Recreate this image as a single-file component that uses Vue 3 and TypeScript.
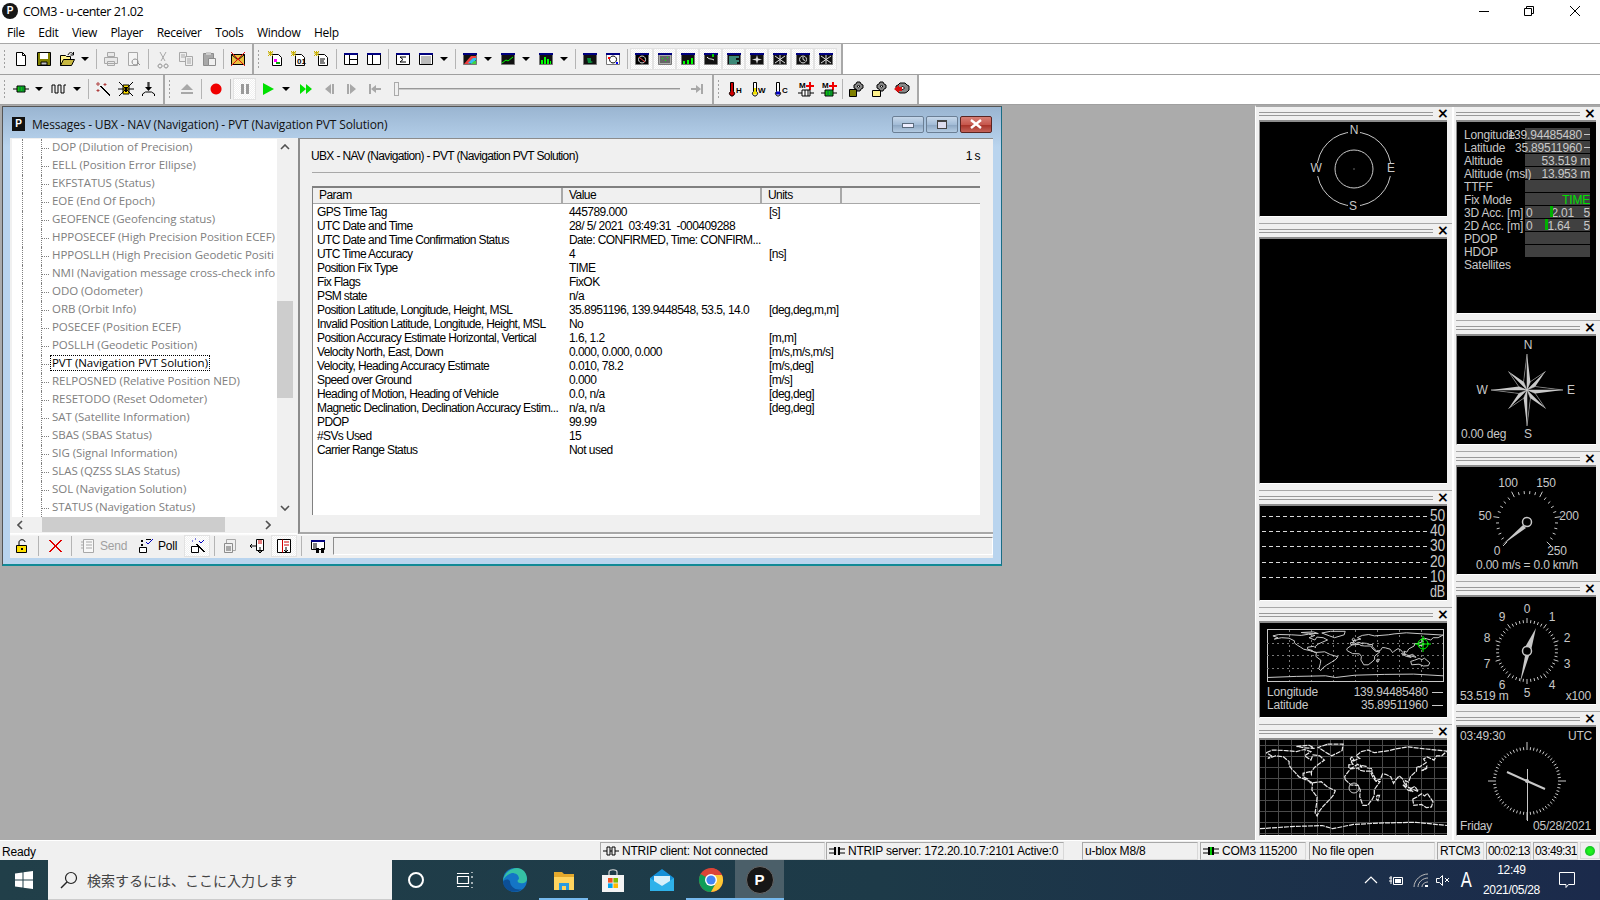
<template>
  <div class="app">
    <header class="titlebar">
      <span class="logo">P</span>
      <span class="title-text">COM3 - u-center 21.02</span>
      <div class="sys-btns">
        <svg class="sys" viewBox="0 0 46 22"><path d="M19 11.500h10" stroke="#000" /></svg>
        <svg class="sys" viewBox="0 0 46 22"><path d="M18.500 8.500h7v7h-7zM20.500 8.500v-2h7v7h-2" fill="none" stroke="#000" /></svg>
        <svg class="sys" viewBox="0 0 46 22"><path d="M18 6l10 10M28 6 18 16" fill="none" stroke="#000" /></svg>
      </div>
    </header>
    <nav class="menubar">
      <span v-for="m in menu" :key="m" class="menu-item">{{ m }}</span>
    </nav>

    <div class="tb-row tb-first">
      <div v-for="(sec, si) in toolbar1" :key="si" class="tb-sec" :class="`w1-${si}`">
        <template v-for="(it, k) in sec" :key="k">
          <i v-if="it === 'grip'" class="grip"></i>
          <i v-else-if="it === '|'" class="sep"></i>
          <i v-else-if="it === 'v'" class="drop"></i>
          <span v-else class="tb-btn" :class="{ pressed: it.endsWith('*') }">
            <svg viewBox="0 0 16 16" class="ico">
              <path v-for="(s, n) in iconOf(it)" :key="n" :d="s[0]" :fill="s[1] || 'none'" :stroke="s[2] || 'none'" />
              <text v-if="labels[it]" :x="labels[it].x" :y="labels[it].y" class="ico-label">{{ labels[it].t }}</text>
            </svg>
          </span>
        </template>
      </div>
    </div>
    <div class="tb-row">
      <div v-for="(sec, si) in toolbar2" :key="si" class="tb-sec" :class="`w2-${si}`">
        <template v-for="(it, k) in sec" :key="k">
          <i v-if="it === 'grip'" class="grip"></i>
          <i v-else-if="it === '|'" class="sep"></i>
          <i v-else-if="it === 'v'" class="drop"></i>
          <span v-else-if="it === 'slider'" class="slider"><b></b></span>
          <span v-else class="tb-btn" :class="{ pressed: it.endsWith('*') }">
            <svg viewBox="0 0 16 16" class="ico">
              <path v-for="(s, n) in iconOf(it)" :key="n" :d="s[0]" :fill="s[1] || 'none'" :stroke="s[2] || 'none'" />
              <text v-if="labels[it]" :x="labels[it].x" :y="labels[it].y" class="ico-label">{{ labels[it].t }}</text>
            </svg>
          </span>
        </template>
      </div>
    </div>

    <main class="main">
      <section class="mdi">
        <div class="msgwin">
          <div class="win-title">
            <span class="win-logo">P</span>
            <span class="win-caption">Messages - UBX - NAV (Navigation) - PVT (Navigation PVT Solution)</span>
            <div class="win-btns">
              <span class="cap-btn"><i class="cap-min"></i></span>
              <span class="cap-btn"><i class="cap-max"></i></span>
              <span class="cap-btn cap-close">
                <svg viewBox="0 0 12 10" width="12" height="10"><path d="M1 1l10 8M11 1 1 9" stroke="#fff" stroke-width="2.400" /></svg>
              </span>
            </div>
          </div>
          <div class="win-body">
            <div class="win-top">
              <div class="tree-pane">
                <div class="tree-wrap">
                  <ul class="tree">
                    <li v-for="t in tree" :key="t" class="tree-row">
                      <i class="guide"></i><i class="guide2"></i>
                      <span class="tree-label" :class="{ sel: t.startsWith('PVT') }">{{ t }}</span>
                    </li>
                  </ul>
                  <div class="vscroll">
                    <svg viewBox="0 0 10 6" class="arrow-v"><path d="M1 5l4-4 4 4" fill="none" stroke="#505050" stroke-width="1.600" /></svg>
                    <div class="vtrack"><div class="vthumb"></div></div>
                    <svg viewBox="0 0 10 6" class="arrow-v"><path d="M1 1l4 4 4-4" fill="none" stroke="#505050" stroke-width="1.600" /></svg>
                  </div>
                </div>
                <div class="hscroll">
                  <svg viewBox="0 0 6 10" class="arrow-h"><path d="M5 1 1 5l4 4" fill="none" stroke="#505050" stroke-width="1.600" /></svg>
                  <div class="hthumb"></div>
                  <svg viewBox="0 0 6 10" class="arrow-h"><path d="M1 1l4 4-4 4" fill="none" stroke="#505050" stroke-width="1.600" /></svg>
                </div>
              </div>
              <div class="detail">
                <div class="detail-head">
                  <span class="detail-name">UBX - NAV (Navigation) - PVT (Navigation PVT Solution)</span>
                  <span>1 s</span>
                </div>
                <div class="list">
                  <div class="list-head">
                    <span class="col-param">Param</span>
                    <span class="col-value">Value</span>
                    <span class="col-units">Units</span>
                    <span class="col-rest"></span>
                  </div>
                  <div class="list-rows">
                    <div v-for="r in rows" :key="r[0]" class="list-row">
                      <span class="cell-param">{{ r[0] }}</span>
                      <span class="cell-value">{{ r[1] }}</span>
                      <span class="cell-units">{{ r[2] }}</span>
                    </div>
                  </div>
                </div>
              </div>
            </div>
            <div class="win-bottom">
              <div class="bottom-tools">
                <template v-for="(it, k) in bottomTools" :key="k">
                  <i v-if="it === '|'" class="sep"></i>
                  <i v-else-if="it === '_'" class="spacer"></i>
                  <span v-else-if="it === 'Send'" class="bt-text off">Send</span>
                  <span v-else-if="it === 'Poll'" class="bt-text poll">Poll</span>
                  <span v-else class="tb-btn" :class="{ pressed: it.endsWith('*') }">
                    <svg viewBox="0 0 16 16" class="ico"><path v-for="(s, n) in iconOf(it)" :key="n" :d="s[0]" :fill="s[1] || 'none'" :stroke="s[2] || 'none'" /></svg>
                  </span>
                </template>
              </div>
              <div class="cmd-field"></div>
            </div>
          </div>
        </div>
      </section>

      <aside class="dock">
        <div class="dock-col dock-left">
          <div class="panel">
            <div class="panel-head"><i class="panel-grip"></i><b class="panel-x">×</b></div>
            <svg class="panel-body p-left h94" viewBox="0 0 187 94">
              <circle cx="94" cy="47" r="37" class="ln" />
              <circle cx="94" cy="47" r="19" class="ln" />
              <rect x="93.500" y="46.500" width="1" height="1" fill="#ccc" />
              <rect x="88" y="2" width="12" height="13" fill="#000" />
              <rect x="88" y="79" width="12" height="13" fill="#000" />
              <rect x="49" y="41" width="14" height="13" fill="#000" />
              <rect x="125" y="41" width="12" height="13" fill="#000" />
              <text x="94" y="12" class="t c">N</text>
              <text x="93" y="88" class="t c">S</text>
              <text x="56" y="50" class="t c">W</text>
              <text x="131" y="50" class="t c">E</text>
            </svg>
          </div>
          <div class="panel">
            <div class="panel-head"><i class="panel-grip"></i><b class="panel-x">×</b></div>
            <svg class="panel-body p-left h244" viewBox="0 0 187 244"></svg>
          </div>
          <div class="panel">
            <div class="panel-head"><i class="panel-grip"></i><b class="panel-x">×</b></div>
            <svg class="panel-body p-left h94" viewBox="0 0 187 94">
              <path v-for="y in [10, 25, 40, 56, 71]" :key="y" :d="`M2 ${y + 0.5}H167`" class="dash" />
              <text v-for="(l, n) in snrLabels" :key="l" x="185" :y="15 + n * 15.200" class="t e tall" textLength="15" lengthAdjust="spacingAndGlyphs">{{ l }}</text>
            </svg>
          </div>
          <div class="panel">
            <div class="panel-head"><i class="panel-grip"></i><b class="panel-x">×</b></div>
            <svg class="panel-body p-left h94" viewBox="0 0 187 94">
              <rect x="7.500" y="6.500" width="176" height="52" class="ln" />
              <path d="M7 20.500H183M7 32.500H183M7 45.500H183M29.500 7V58M51.500 7V58M73.500 7V58M95.500 7V58M117.500 7V58M139.500 7V58M161.500 7V58" stroke="#777" stroke-dasharray="2 3" fill="none" />
              <path :d="mapSmall" class="ln" />
              <g fill="none" stroke="#0f0">
                <circle cx="163" cy="21" r="5" />
                <path d="M163 13v16M155 21h16" />
              </g>
              <text x="7" y="73" class="t">Longitude</text>
              <text x="7" y="86" class="t">Latitude</text>
              <text x="168" y="73" class="t e">139.94485480</text>
              <text x="168" y="86" class="t e">35.89511960</text>
              <path d="M172 69.500H183M172 82.500H183" class="ln" />
            </svg>
          </div>
          <div class="panel">
            <div class="panel-head"><i class="panel-grip"></i><b class="panel-x">×</b></div>
            <svg class="panel-body p-left h95" viewBox="0 0 187 95">
              <path :d="gridLarge" stroke="#4a4a4a" fill="none" />
              <path :d="mapLarge" fill="none" stroke="#e8e8e8" stroke-width="1.200" stroke-dasharray="5 1" />
              <circle cx="94" cy="48" r="5" class="ln" />
            </svg>
          </div>
        </div>

        <div class="dock-col dock-right">
          <div class="panel">
            <div class="panel-head"><i class="panel-grip"></i><b class="panel-x">×</b></div>
            <svg class="panel-body p-right h191" viewBox="0 0 139 191">
              <template v-for="(r, n) in infoRows" :key="r.label">
                <rect v-if="n < 10" x="68" :y="6 + n * 13" width="65" height="12" fill="#404040" />
                <text x="7" :y="17 + n * 13" class="t">{{ r.label }}</text>
                <text v-if="r.value" :x="r.x" :y="17 + n * 13" class="t e" :class="{ green: r.green }">{{ r.value }}</text>
              </template>
              <path d="M127 12.500H133M127 25.500H133" class="ln" />
              <text x="69" y="95" class="t">0</text><text x="133" y="95" class="t e">5</text>
              <text x="69" y="108" class="t">0</text><text x="133" y="108" class="t e">5</text>
              <rect x="93" y="84" width="3" height="11" fill="#00b000" />
              <rect x="88" y="97" width="3" height="11" fill="#00b000" />
            </svg>
          </div>
          <div class="panel">
            <div class="panel-head"><i class="panel-grip"></i><b class="panel-x">×</b></div>
            <svg class="panel-body p-right h108" viewBox="0 0 139 108">
              <path :d="starLight" fill="#c8c8c8" />
              <path :d="starDark" fill="#000" stroke="#c8c8c8" stroke-width="0.500" />
              <text x="71" y="13" class="t c">N</text>
              <text x="71" y="102" class="t c">S</text>
              <text x="25" y="58" class="t c">W</text>
              <text x="114" y="58" class="t c">E</text>
              <text x="4" y="102" class="t">0.00 deg</text>
            </svg>
          </div>
          <div class="panel">
            <div class="panel-head"><i class="panel-grip"></i><b class="panel-x">×</b></div>
            <svg class="panel-body p-right h107" viewBox="0 0 139 107">
              <path :d="speedTicks" class="ln" />
              <path d="M66 58 45 78 69 61z" fill="#c8c8c8" />
              <circle cx="70" cy="55" r="4.500" fill="#000" stroke="#c8c8c8" stroke-width="1.500" />
              <text x="51" y="20" class="t c">100</text>
              <text x="89" y="20" class="t c">150</text>
              <text x="28" y="53" class="t c">50</text>
              <text x="112" y="53" class="t c">200</text>
              <text x="40" y="88" class="t c">0</text>
              <text x="100" y="88" class="t c">250</text>
              <text x="70" y="102" class="t c">0.00 m/s = 0.0 km/h</text>
            </svg>
          </div>
          <div class="panel">
            <div class="panel-head"><i class="panel-grip"></i><b class="panel-x">×</b></div>
            <svg class="panel-body p-right h107" viewBox="0 0 139 107">
              <path :d="altTicks" class="ln" />
              <path d="M79 31 67 52 73 58z" fill="#c8c8c8" />
              <path d="M68 59 63 86 72 59z" fill="#c8c8c8" />
              <circle cx="70" cy="54" r="4.500" fill="#000" stroke="#c8c8c8" stroke-width="1.500" />
              <text v-for="d in altDigits" :key="d.t" :x="d.x" :y="d.y" class="t c">{{ d.t }}</text>
              <text x="3" y="103" class="t">53.519 m</text>
              <text x="134" y="103" class="t e">x100</text>
            </svg>
          </div>
          <div class="panel">
            <div class="panel-head"><i class="panel-grip"></i><b class="panel-x">×</b></div>
            <svg class="panel-body p-right h108" viewBox="0 0 139 108">
              <path :d="clockTicks" class="ln" />
              <path d="M50 45 70 54 88 62" fill="none" stroke="#c8c8c8" stroke-width="2" />
              <path d="M70.500 42V94" class="ln" />
              <circle cx="70" cy="54" r="2" fill="#c8c8c8" />
              <text x="3" y="13" class="t">03:49:30</text>
              <text x="135" y="13" class="t e">UTC</text>
              <text x="3" y="103" class="t">Friday</text>
              <text x="134" y="103" class="t e">05/28/2021</text>
            </svg>
          </div>
        </div>
      </aside>
    </main>

    <footer class="statusbar">
      <span class="st-ready">Ready</span>
      <span v-for="s in statusPanes" :key="s.text" class="st-pane" :class="s.cls">
        <svg v-if="s.icon" viewBox="0 0 16 16" class="st-ico"><path v-for="(p, n) in iconOf(s.icon)" :key="n" :d="p[0]" :fill="p[1] || 'none'" :stroke="p[2] || 'none'" /></svg>
        {{ s.text }}
      </span>
      <span class="st-led"><i></i></span>
    </footer>

    <div class="taskbar">
      <div class="start">
        <svg viewBox="0 0 18 18" width="18" height="18"><path d="M0 2.500 7.500 1.400V8.500H0zM8.500 1.300 18 0V8.500H8.500zM0 9.500H7.500V16.600L0 15.500zM8.500 9.500H18V18L8.500 16.700z" fill="#fff" /></svg>
      </div>
      <div class="search">
        <svg viewBox="0 0 20 20" width="20" height="20"><circle cx="12" cy="8" r="5.500" fill="none" stroke="#222" stroke-width="1.200" /><path d="M8 12 2 18" stroke="#222" stroke-width="1.400" /></svg>
        <span>検索するには、ここに入力します</span>
      </div>
      <div class="task-ico">
        <svg viewBox="0 0 24 24" width="24" height="24"><circle cx="12" cy="12" r="7" fill="none" stroke="#fff" stroke-width="2" /></svg>
      </div>
      <div class="task-ico">
        <svg viewBox="0 0 24 24" width="24" height="24"><path d="M5.500 8.500h11v7h-11zM5 5.500h12M5 18.500h12M20 8v2M20 14v2M20 4v1M20 19v1" fill="none" stroke="#fff" stroke-width="1.200" /></svg>
      </div>
      <div class="task-ico app-ico first-app">
        <svg viewBox="0 0 26 26" width="26" height="26"><circle cx="13" cy="13" r="12" fill="#1475c6" /><path d="M1 14C2 6 9 1 15 1c6 0 10 5 10 11 0 3-3 5-7 4-3 0-3-3-1-4 0-4-3-6-7-6-4 1-8 4-9 8z" fill="#35c1a5" /><path d="M8 14c0 6 6 10 12 8-6 5-18 3-19-7 2-3 5-3 7-1z" fill="#0c4f96" /></svg>
      </div>
      <div class="task-ico app-ico running">
        <svg viewBox="0 0 24 24" width="24" height="24"><path d="M2 4h8l2 2h10v3H2z" fill="#e4a92c" /><path d="M2 9h20v13H2z" fill="#ffd45f" /><path d="M7 15h10v7H7z" fill="#2b9be0" /><path d="M10 18h4v4h-4z" fill="#ffd45f" /></svg>
      </div>
      <div class="task-ico app-ico">
        <svg viewBox="0 0 24 24" width="24" height="24"><path d="M8 7V4c0-3 8-3 8 0v3" fill="none" stroke="#ddd" stroke-width="1.200" /><path d="M1 7h22v17H1z" fill="#f3f3f3" /><path d="M7 10h4.600v4.600H7z" fill="#f25022" /><path d="M12.400 10H17v4.600h-4.600z" fill="#7fba00" /><path d="M7 15.400h4.600V20H7z" fill="#00a4ef" /><path d="M12.400 15.400H17V20h-4.600z" fill="#ffb900" /></svg>
      </div>
      <div class="task-ico app-ico">
        <svg viewBox="0 0 24 24" width="24" height="24"><path d="M0 10 12 1l12 9v13H0z" fill="#1590d8" /><path d="M0 10l12 8 12-8v13H0z" fill="#2fb2ea" /><path d="M4 8h16v5l-8 5-8-5z" fill="#d8f0fb" /></svg>
      </div>
      <div class="task-ico app-ico running">
        <svg viewBox="0 0 26 26" width="26" height="26"><circle cx="13" cy="13" r="12" fill="#dc4437" /><path d="M13 13 2.600 7A12 12 0 0 0 13 25l5-9z" fill="#0f9d58" /><path d="M13 1a12 12 0 0 1 11.900 12H13z" fill="#dc4437" /><path d="M13 8h11a12 12 0 0 1-11 17l5-9z" fill="#fcc934" /><circle cx="13" cy="13" r="6" fill="#fff" /><circle cx="13" cy="13" r="4.600" fill="#4285f4" /></svg>
      </div>
      <div class="task-ico app-ico active"><span class="logo big">P</span></div>
      <div class="tray">
        <svg viewBox="0 0 16 16" width="16" height="16"><path d="M2 11l6-6 6 6" fill="none" stroke="#fff" stroke-width="1.200" /></svg>
        <svg viewBox="0 0 16 16" width="16" height="16"><path d="M5.500 5.500h9v7h-9zM1 6h3M1 9h3M3 4v8" fill="none" stroke="#fff" /><path d="M7 7h6v4H7z" fill="#fff" /></svg>
        <svg viewBox="0 0 16 16" width="16" height="16"><path d="M1 15C1 8 8 2 15 2M5 15c0-5 5-9 10-9M9 15c0-3 3-5 6-5" fill="none" stroke="#bbb" /><path d="M12 13h3v2h-3z" fill="#fff" /></svg>
        <svg class="tray-vol" viewBox="0 0 16 16" width="16" height="16"><path d="M1.500 6.500h3l3-3v10l-3-3h-3zM10 6l4 4M14 6l-4 4" fill="none" stroke="#fff" /></svg>
        <span class="ime">A</span>
        <div class="clock"><span>12:49</span><span>2021/05/28</span></div>
        <svg class="notify" viewBox="0 0 18 18" width="18" height="18"><path d="M1.500 1.500h15v12h-6l-2.500 3v-3h-6.500z" fill="none" stroke="#fff" /></svg>
      </div>
    </div>
  </div>
</template>

<script setup lang="ts">
type Shape = [string, string?, string?];

const menu = ['File', 'Edit', 'View', 'Player', 'Receiver', 'Tools', 'Window', 'Help'];

const G = '#a8a8a8';
const D = '#8c8c8c';
const icons: Record<string, Shape[]> = {
  new: [['M3.500 1.500h6l3 3v10h-9z', '#fff', '#000'], ['M9.500 1.500v3h3', '', '#000']],
  save: [['M1.500 1.500h13v13h-13z', '#808000', '#000'], ['M4 2h8v6H4z', '#fff'], ['M5 11h6v3H5z', '#c0c0c0', '#000']],
  open: [['M1.500 4.500h5l1 1h4v9h-10z', '#fff28c', '#000'], ['M1.500 14.500l3-6h11l-3 6z', '#c8b840', '#000'], ['M9 4c1-3 4-3 5-1M14.500 1v3h-3', '', '#000']],
  print: [['M4.500 1.500h7v4h-7zM1.500 6.500h13v6h-13zM4.500 10.500h7v4h-7z', '#e8e8e8', G]],
  preview: [['M2.500 1.500h9v13h-9z', '#f4f4f4', G], ['M9 8a3 3 0 1 0 .1 0zM11 11l3 3', '', D]],
  cut: [['M5 1l5 9M11 1l-5 9', '', G], ['M5 13a2 2 0 1 0 .1 0zM11 13a2 2 0 1 0 .1 0', '', D]],
  copy: [['M1.500 1.500h7v9h-7z', '#eee', G], ['M7.500 5.500h7v9h-7z', '#eee', G], ['M3 4h4M3 6h4M9 8h4M9 10h4M9 12h4', '', G]],
  paste: [['M2.500 2.500h10v12h-10z', G, D], ['M5 1h5v3H5z', '#ccc'], ['M7.500 7.500h7v7h-7z', '#f0f0f0', D]],
  nocon: [['M1.500 3.500h13v10h-13z', '#e8c040', '#000'], ['M1.500 3.500 8 9l6.500-5.500', '', '#000'], ['M1 1l14 14M15 1 1 15', '', '#e01010']],
  newa: [['M4.500 3.500h6l3 3v8h-9z', '#fff', '#000'], ['M0 2h5M2.500 0v5M0 0l5 5M5 0 0 5', '', '#c8b000'], ['M6 8h3v3H6z', '#f0f'], ['M8 11h4v2H8z', '#0a0']],
  newb: [['M4.500 3.500h6l3 3v8h-9z', '#fff', '#000'], ['M0 2h5M2.500 0v5M0 0l5 5M5 0 0 5', '', '#c8b000']],
  newc: [['M4.500 3.500h6l3 3v8h-9z', '#fff', '#000'], ['M0 2h5M2.500 0v5M0 0l5 5M5 0 0 5', '', '#c8b000'], ['M6 8h5M6 10h4M6 12h5', '', '#000']],
  split1: [['M1.500 2.500h13v11h-13z', '#fff', '#000'], ['M1 2h14v2H1z', '#000080'], ['M6.500 4v9M7 8.500h7', '', '#000']],
  split2: [['M1.500 2.500h13v11h-13z', '#fff', '#000'], ['M1 2h14v2H1z', '#000080'], ['M6.500 4v9', '', '#000']],
  sigma: [['M1.500 2.500h13v11h-13z', '#fff', '#000'], ['M1 2h14v2H1z', '#000080'], ['M11 6H5l3 2.500L5 11h6', '', '#000']],
  table: [['M1.500 2.500h13v11h-13z', '#fff', '#000'], ['M1 2h14v2H1z', '#000080'], ['M3 6h10M3 8h10M3 10h10M3 12h10', '', '#777']],
  chart3d: [['M1.500 2.500h13v11h-13z', '#111', '#777'], ['M1 2h14v2H1z', '#000080'], ['M2 13 9 5h5v3l-7 5z', '#f04040'], ['M6 12l5-5h3v2l-4 4z', '#30c0f0'], ['M9 13l3-3h2v3z', '#40d040']],
  line: [['M1.500 2.500h13v11h-13z', '#111', '#777'], ['M1 2h14v2H1z', '#000080'], ['M2 12l4-3 2 1 5-4', '', '#0f0']],
  bars: [['M1.500 2.500h13v11h-13z', '#111', '#777'], ['M1 2h14v2H1z', '#000080'], ['M3 9h2v4H3zM6 6h2v7H6zM9 8h2v5H9zM12 10h1v3h-1z', '#0f0']],
  mapw: [['M1.500 2.500h13v11h-13z', '#111', '#777'], ['M1 2h14v2H1z', '#000080'], ['M5 7h4v3l2 1-2 1H6z', '#0a8a3a']],
  sky: [['M1.500 2.500h13v11h-13z', '#fff', '#777'], ['M1 2h14v2H1z', '#000080'], ['M8 5a3.500 3.500 0 1 0 .1 0z', '', '#000'], ['M3 6h2v2H3z', '#f00'], ['M11 11h2v2h-2z', '#00f']],
  v1: [['M1.500 2.500h13v11h-13z', '#fff', '#777'], ['M1 2h14v2H1z', '#000080'], ['M2 4h12v9H2z', '#000'], ['M8 5a3.500 3.500 0 1 0 .1 0z', '', '#ddd'], ['M5 6l6 5', '', '#f44']],
  v2: [['M1.500 2.500h13v11h-13z', '#aaa', '#777'], ['M1 2h14v2H1z', '#000080'], ['M3 5h10v7H3z', '#666'], ['M5 7h1v1H5zM8 9h1v1H8zM10 6h1v1h-1z', '#0f0']],
  v3: [['M1.500 2.500h13v11h-13z', '#111', '#777'], ['M1 2h14v2H1z', '#000080'], ['M3 10h2v3H3zM7 9h2v4H7zM11 7h2v6h-2z', '#0f0']],
  v4: [['M1.500 2.500h13v11h-13z', '#fff', '#777'], ['M1 2h14v2H1z', '#000080'], ['M2 4h12v9H2z', '#111'], ['M4 6c3 3 3 1 7 3', '', '#fff'], ['M9 3h2v3H9z', '#0c0']],
  v5: [['M1.500 2.500h13v11h-13z', '#111', '#777'], ['M1 2h14v2H1z', '#000080'], ['M3 6h10M3 8h7M3 10h10M3 12h8', '', '#6fd']],
  v6: [['M1.500 2.500h13v11h-13z', '#111', '#777'], ['M1 2h14v2H1z', '#000080'], ['M8 4l1 3.500L13 8.500 9 9.500 8 13 7 9.500 3 8.500 7 7.500z', '#ddd']],
  v7: [['M1.500 2.500h13v11h-13z', '#111', '#777'], ['M1 2h14v2H1z', '#000080'], ['M3 5l10 7M13 5 3 12M8 4v9', '', '#ddd']],
  v8: [['M1.500 2.500h13v11h-13z', '#111', '#777'], ['M1 2h14v2H1z', '#000080'], ['M8 5a3.500 3.500 0 1 0 .1 0zM8 8.500V6M8 8.500l2 1', '', '#ddd']],
  conn: [['M0 8h16', '', '#000'], ['M4 5h8v6H4z', '#10c010', '#000'], ['M7 5v6M10 5v6', '', '#064']],
  wave: [['M1 12V4h3v8h3V4h3v8h3V4h2', '', '#000']],
  wand: [['M5 5l10 10M6 5l9 9', '', '#000'], ['M3 1v4M1 3h4M10 2v3M8.500 3.500h3M3 8v3M1.500 9.500h3', '', '#b04040']],
  bug: [['M5 4h6v9H5z', '#ffe000', '#000'], ['M1 1l14 14M15 1 1 15M0 8h16', '', '#000'], ['M7 6h2v5H7z', '#000']],
  dl: [['M8 1v7M7 1v7', '', '#000'], ['M4 6h7L7.500 10z', '#000'], ['M1.500 15v-2l3-2h6l3 2v2', '', '#000']],
  eject: [['M8 3l6 6H2z', G], ['M2 11h12v2H2z', G]],
  rec: [['M8 2.500a5.500 5.500 0 1 0 .1 0z', '#f00000']],
  pause: [['M4 3h3v10H4zM9 3h3v10H9z', '#9a9a9a']],
  play: [['M3 2l11 6-11 6z', '#00e000']],
  ff: [['M2 3l6 5-6 5zM8 3l6 5-6 5z', '#00e000']],
  stepb: [['M10 3v10L4 8zM11 3h2v10h-2z', G]],
  stepf: [['M6 3v10l6-5zM3 3h2v10H3z', G]],
  first: [['M2 3h2v10H2zM4 8l5-4v3h5v2H9v3z', G]],
  last: [['M12 3h2v10h-2zM12 8 7 4v3H2v2h5v3z', G]],
  th: [['M1.500 1.500h3v9a2.500 2.500 0 1 1-3 0z', '#d00000', '#000']],
  tw: [['M1.500 1.500h3v9a2.500 2.500 0 1 1-3 0z', '#fff', '#000'], ['M2 7h2v4H2zM1 11h4v2.500H1z', '#f0e000']],
  tc: [['M1.500 1.500h3v9a2.500 2.500 0 1 1-3 0z', '#fff', '#000'], ['M1 10.500h4v3H1z', '#0000c0']],
  mc: [['M11 1h2v3h3v2h-3v3h-2V6H8V4h3z', '#f00000'], ['M0 12h16', '', '#000'], ['M4 9h8v6H4z', '#fff', '#000'], ['M7 9v6M10 9v6', '', '#000']],
  md: [['M11 1h2v3h3v2h-3v3h-2V6H8V4h3z', '#f00000'], ['M0 12h16', '', '#000'], ['M4 9h8v6H4z', '#10c010', '#000'], ['M7 9v6M10 9v6', '', '#064']],
  g1: [['M9 1h3l1 2 2 1v3l-2 1-1 2H9L8 8 6 7V4l2-1z', '#888', '#000'], ['M10.500 4.500a1 1 0 1 0 .1 0', '#fff', '#000'], ['M1.500 8.500h7v7h-7z', '#808000', '#000']],
  g2: [['M9 1h3l1 2 2 1v3l-2 1-1 2H9L8 8 6 7V4l2-1z', '#888', '#000'], ['M10.500 4.500a1 1 0 1 0 .1 0', '#fff', '#000'], ['M1.500 9.500h8v6h-8z', '#fff28c', '#000']],
  g3: [['M6 2h5l2 2 2 1v4l-2 2-2 1H6L4 11 2 9V5l2-1z', '#888', '#000'], ['M8.500 5.500a1.500 1.500 0 1 0 .1 0', '#fff', '#000'], ['M0 8l5-4v2h3v4H5v2z', '#e01010']],
  lock: [['M2.500 7.500h10v7h-10z', '#ffe000', '#000'], ['M5 7V4c0-3 6-3 6 0', '', '#000'], ['M7 10h2v2H7z', '#000']],
  del: [['M2 2l12 12M14 2 2 14M3 2l12 12M15 2 3 14', '', '#e00000']],
  send: [['M3.500 1.500h10v13h-10z', '#f8f8f8', G], ['M1 4h3M1 7h3M1 10h3M6 4h6M6 7h6M6 10h6', '', G]],
  poll: [['M1.500 9.500h7v5h-7z', '#fff', '#000'], ['M3 2h2v2H3zM3 6h2v2H3z', '#000'], ['M8 4l2 2 5-5', '', '#0000c0'], ['M8 1h5v1H8z', '#000']],
  polla: [['M2.500 8.500h7v6h-7z', '#fff', '#000'], ['M7 6l8 8M8 6l8 8', '', '#000'], ['M3 3h1M6 1h1M10 3l2 2 3-3', '', '#0000c0']],
  copy2: [['M3.500 1.500h9v11h-9z', '#f0f0f0', G], ['M1.500 5.500h8v9h-8z', '#f0f0f0', D], ['M3 8h5v5H3z', G]],
  arr1: [['M7.500 1.500h7v11h-7z', '#fff', '#000'], ['M9 3h4M9 5h4', '', '#d00000'], ['M1 8h6M3 6 1 8l2 2', '', '#000'], ['M11 9v6M9 13l2 2 2-2', '', '#000']],
  arr2: [['M1.500 1.500h13v13h-13z', '#fff', '#000'], ['M6.500 1.500v13M8 4h5M8 7h5', '', '#d00000'], ['M10 9v5M8 12l2 2 2-2', '', '#000']],
  find: [['M1.500 2.500h13v9h-13z', '#fff', '#000'], ['M1 2h14v2H1z', '#000080'], ['M3 6h4M3 8h4M3 10h4', '', '#000'], ['M6 10h3v5H6zM11 10h3v5h-3z', '#000']],
  clientIco: [['M0 8h16', '', '#000'], ['M4 4h3v8H4zM9 4h3v8H9z', '#f0f0f0', '#000']],
  serverIco: [['M0 6h16M0 10h16', '', '#000'], ['M5 4h6v8H5z', '#000'], ['M7 4h2v8H7z', '#ddd']],
  comIco: [['M0 6h16M0 10h16', '', '#000'], ['M5 4h6v8H5z', '#000'], ['M7 4h2v8H7z', '#0c0']],
};

const labels: Record<string, { t: string; x: number; y: number }> = {
  newb: { t: '01', x: 6, y: 13 },
  th: { t: 'H', x: 7, y: 12 },
  tw: { t: 'W', x: 6, y: 12 },
  tc: { t: 'C', x: 7, y: 12 },
  mc: { t: 'M', x: 1, y: 7 },
  md: { t: 'M', x: 1, y: 7 },
};

function iconOf(name: string): Shape[] {
  return icons[name.replace('*', '')] || [];
}

const toolbar1 = [
  ['grip', 'new', 'save', 'open', 'v', '|', 'print', 'preview', '|', 'cut', 'copy', 'paste', '|', 'nocon'],
  ['grip', 'newa', 'newb', 'newc', '|', 'split1', 'split2', '|', 'sigma', 'table', 'v', '|', 'chart3d', 'v', 'line', 'v', 'bars', 'v', '|', 'mapw', 'sky', '|', 'v1*', 'v2*', 'v3*', 'v4*', 'v5*', 'v6*', 'v7*', 'v8*', 'v7*'],
];
const toolbar2 = [
  ['grip', 'conn', 'v', 'wave', 'v', '|', 'wand', 'bug', 'dl'],
  ['grip', 'eject', '|', 'rec', '|', 'pause*', 'play', 'v', 'ff', 'stepb', 'stepf', 'first', 'slider', 'last'],
  ['grip', 'th', 'tw', 'tc', 'mc', 'md', '|', 'g1', 'g2', 'g3'],
];
const bottomTools = ['lock', '|', 'del', '|', 'send', 'Send', 'poll', 'Poll', 'polla*', '|', 'copy2', '_', 'arr1', '_', 'arr2*', '|', 'find'];

const tree = [
  'DOP (Dilution of Precision)', 'EELL (Position Error Ellipse)', 'EKFSTATUS (Status)', 'EOE (End Of Epoch)',
  'GEOFENCE (Geofencing status)', 'HPPOSECEF (High Precision Position ECEF)', 'HPPOSLLH (High Precision Geodetic Positi',
  'NMI (Navigation message cross-check info', 'ODO (Odometer)', 'ORB (Orbit Info)', 'POSECEF (Position ECEF)',
  'POSLLH (Geodetic Position)', 'PVT (Navigation PVT Solution)', 'RELPOSNED (Relative Position NED)',
  'RESETODO (Reset Odometer)', 'SAT (Satellite Information)', 'SBAS (SBAS Status)', 'SIG (Signal Information)',
  'SLAS (QZSS SLAS Status)', 'SOL (Navigation Solution)', 'STATUS (Navigation Status)',
];

const rows: [string, string, string][] = [
  ['GPS Time Tag', '445789.000', '[s]'],
  ['UTC Date and Time', '28/ 5/ 2021  03:49:31  -000409288', ''],
  ['UTC Date and Time Confirmation Status', 'Date: CONFIRMED, Time: CONFIRM...', ''],
  ['UTC Time Accuracy', '4', '[ns]'],
  ['Position Fix Type', 'TIME', ''],
  ['Fix Flags', 'FixOK', ''],
  ['PSM state', 'n/a', ''],
  ['Position Latitude, Longitude, Height, MSL', '35.8951196, 139.9448548, 53.5, 14.0', '[deg,deg,m,m]'],
  ['Invalid Position Latitude, Longitude, Height, MSL', 'No', ''],
  ['Position Accuracy Estimate Horizontal, Vertical', '1.6, 1.2', '[m,m]'],
  ['Velocity North, East, Down', '0.000, 0.000, 0.000', '[m/s,m/s,m/s]'],
  ['Velocity, Heading Accuracy Estimate', '0.010, 78.2', '[m/s,deg]'],
  ['Speed over Ground', '0.000', '[m/s]'],
  ['Heading of Motion, Heading of Vehicle', '0.0, n/a', '[deg,deg]'],
  ['Magnetic Declination, Declination Accuracy Estim...', 'n/a, n/a', '[deg,deg]'],
  ['PDOP', '99.99', ''],
  ['#SVs Used', '15', ''],
  ['Carrier Range Status', 'Not used', ''],
];

const snrLabels = ['50', '40', '30', '20', '10', 'dB'];

const infoRows = [
  { label: 'Longitude', value: '139.94485480', x: 125 },
  { label: 'Latitude', value: '35.89511960', x: 125 },
  { label: 'Altitude', value: '53.519 m', x: 133 },
  { label: 'Altitude (msl)', value: '13.953 m', x: 133 },
  { label: 'TTFF', value: '', x: 133 },
  { label: 'Fix Mode', value: 'TIME', x: 133, green: true },
  { label: '3D Acc. [m]', value: '2.01', x: 117 },
  { label: '2D Acc. [m]', value: '1.64', x: 113 },
  { label: 'PDOP', value: '', x: 133 },
  { label: 'HDOP', value: '', x: 133 },
  { label: 'Satellites', value: '', x: 133 },
];

const statusPanes = [
  { text: 'NTRIP client: Not connected', cls: 'st-client', icon: 'clientIco' },
  { text: 'NTRIP server: 172.20.10.7:2101 Active:0', cls: 'st-server', icon: 'serverIco' },
  { text: 'u-blox M8/8', cls: 'st-rcv', icon: '' },
  { text: 'COM3 115200', cls: 'st-com', icon: 'comIco' },
  { text: 'No file open', cls: 'st-file', icon: '' },
  { text: 'RTCM3', cls: 'st-proto', icon: '' },
  { text: '00:02:13', cls: 'st-time', icon: '' },
  { text: '03:49:31', cls: 'st-time', icon: '' },
];

// radial tick marks for the gauges
function ticks(cx: number, cy: number, r: number, n: number, from: number, sweep: number, major: number, extra: number) {
  let d = '';
  for (let i = 0; i < n; i++) {
    const a = ((from + (sweep * i) / (n - 1 || 1)) * Math.PI) / 180;
    const len = i % major === 0 ? extra : 3;
    const sx = Math.sin(a);
    const cs = -Math.cos(a);
    d += `M${(cx + sx * r).toFixed(1)} ${(cy + cs * r).toFixed(1)}L${(cx + sx * (r + len)).toFixed(1)} ${(cy + cs * (r + len)).toFixed(1)}`;
  }
  return d;
}

const speedTicks = ticks(70, 55, 28, 26, -135, 270, 5, 6);
const altTicks = ticks(70, 54, 28, 50, 0, 352.800, 5, 5);
const clockTicks = ticks(70, 54, 31, 60, 0, 354, 15, 8);

const altDigits = Array.from({ length: 10 }, (_, i) => {
  const a = (i * 36 * Math.PI) / 180;
  return { t: String(i), x: Math.round(70 + Math.sin(a) * 42), y: Math.round(58 - Math.cos(a) * 42) };
});

function star(cx: number, cy: number, long: number, short: number, inner: number) {
  const pts: string[] = [];
  for (let i = 0; i < 16; i++) {
    const a = (i * 22.500 * Math.PI) / 180;
    const r = i % 4 === 0 ? long : i % 4 === 2 ? short : inner;
    pts.push(`${(cx + Math.sin(a) * r).toFixed(1)} ${(cy - Math.cos(a) * r).toFixed(1)}`);
  }
  return `M${pts.join('L')}z`;
}
const starLight = star(70, 54, 36, 26, 9);
const starDark = [0, 1, 2, 3, 4, 5, 6, 7]
  .map((i) => {
    const a = (i * 45 * Math.PI) / 180;
    const r = i % 2 === 0 ? 36 : 26;
    const b = a - (22.500 * Math.PI) / 180;
    return `M70 54L${(70 + Math.sin(a) * r).toFixed(1)} ${(54 - Math.cos(a) * r).toFixed(1)}L${(70 + Math.sin(b) * 9).toFixed(1)} ${(54 - Math.cos(b) * 9).toFixed(1)}z`;
  })
  .join('');

// rough coastlines, lon/lat
const coast: number[][][] = [
  [[-168,66],[-156,71],[-130,70],[-110,68],[-95,72],[-82,68],[-94,60],[-82,52],[-78,62],[-65,60],[-56,52],[-66,45],[-75,38],[-81,30],[-81,25],[-84,30],[-97,27],[-97,20],[-88,16],[-83,9],[-79,9],[-92,15],[-105,20],[-112,28],[-118,34],[-124,42],[-124,49],[-135,58],[-150,60],[-165,55],[-158,60],[-168,66]],
  [[-50,82],[-20,82],[-22,70],[-42,60],[-52,66],[-68,76],[-50,82]],
  [[-110,78],[-85,80],[-75,74],[-95,75],[-110,78]],
  [[-79,9],[-62,11],[-50,1],[-35,-6],[-39,-15],[-48,-25],[-58,-35],[-66,-45],[-70,-54],[-74,-48],[-71,-30],[-70,-18],[-80,-5],[-79,9]],
  [[-16,15],[-17,21],[-10,30],[-6,35],[10,37],[11,33],[20,31],[32,31],[37,20],[43,12],[51,11],[40,-4],[40,-15],[35,-24],[27,-34],[18,-34],[12,-17],[13,-5],[9,4],[-5,5],[-16,15]],
  [[-9,37],[-9,43],[-1,44],[-4,48],[8,54],[12,55],[5,60],[15,68],[28,71],[40,66],[68,70],[80,73],[105,77],[140,73],[180,69],[170,60],[160,60],[155,52],[142,58],[135,54],[140,47],[127,39],[122,40],[121,31],[110,21],[106,10],[100,13],[103,2],[98,8],[94,17],[88,22],[80,13],[77,8],[72,20],[62,25],[56,26],[52,16],[44,13],[35,30],[36,36],[27,37],[24,40],[14,42],[16,38],[8,44],[0,39],[-5,36],[-9,37]],
  [[114,-22],[122,-18],[131,-12],[137,-16],[142,-11],[153,-27],[150,-37],[140,-38],[131,-32],[116,-34],[114,-22]],
  [[-180,-78],[-120,-74],[-60,-72],[-40,-78],[0,-70],[60,-67],[120,-66],[180,-72]],
  [[-5,50],[1,52],[-3,58],[-6,55],[-5,50]],
  [[131,32],[137,35],[141,40],[141,36],[135,33],[131,32]],
  [[95,5],[105,-5],[115,-8],[108,-3],[118,2],[125,-8],[95,5]],
  [[45,-15],[50,-15],[47,-25],[44,-22],[45,-15]],
];

function project(x0: number, y0: number, w: number, h: number) {
  return coast
    .map((line) =>
      line
        .map(([lon, lat], i) => `${i ? 'L' : 'M'}${(x0 + ((lon + 180) / 360) * w).toFixed(1)} ${(y0 + ((90 - lat) / 180) * h).toFixed(1)}`)
        .join(''),
    )
    .join('');
}
const mapSmall = project(7, 6, 176, 52);
const mapLarge = project(0, 0, 187, 95);

let g = '';
for (let x = 5; x < 187; x += 13) g += `M${x + 0.5} 0V95`;
for (let y = 5; y < 95; y += 11) g += `M0 ${y + 0.5}H187`;
const gridLarge = g;
</script>

<style>
html,
body {
  margin: 0;
  background: #fff;
}
</style>

<style scoped>
.app {
  width: 1600px;
  height: 900px;
  display: flex;
  flex-direction: column;
  overflow: hidden;
  font-family: "Liberation Sans", Arial, sans-serif;
  font-size: 12px;
  color: #000;
  background: #fff;
}
.titlebar {
  height: 22px;
  display: flex;
  align-items: center;
  padding-left: 2px;
  flex: none;
}
.logo {
  width: 16px;
  height: 16px;
  border-radius: 50%;
  background: #161616;
  color: #fff;
  font: 700 10px/16px "Liberation Sans", sans-serif;
  text-align: center;
}
.logo.big {
  width: 26px;
  height: 26px;
  font-size: 15px;
  line-height: 26px;
  border: 1px solid #666;
}
.title-text {
  margin-left: 5px;
  font: 12.500px "Open Sans", sans-serif;
  letter-spacing: -0.500px;
}
.sys-btns {
  margin-left: auto;
  display: flex;
  padding-right: 2px;
}
.sys {
  width: 46px;
  height: 22px;
}
.menubar {
  height: 21px;
  display: flex;
  align-items: center;
  padding-left: 7px;
  gap: 13.500px;
  flex: none;
  border-bottom: 1px solid #a8a8a8;
  font: 12px "Open Sans", sans-serif;
  letter-spacing: -0.300px;
}
.tb-row {
  height: 30px;
  flex: none;
  display: flex;
  border-bottom: 1px solid #a0a0a0;
  box-sizing: border-box;
}
.tb-first {
  height: 31px;
}
.tb-sec {
  display: flex;
  align-items: center;
  background: #f0f0f0;
  border-right: 2px solid #a8a8a8;
  box-sizing: border-box;
}
.tb-row:not(.tb-first) .tb-sec {
  padding-bottom: 1px;
}
.w1-0 { width: 254px; }
.w1-1 { width: 589px; }
.w2-0 { width: 165px; }
.w2-1 { width: 549px; }
.w2-2 { width: 205px; }
.grip {
  width: 3px;
  height: 20px;
  margin: 0 3px 0 3px;
  flex: none;
  background-image: radial-gradient(circle, #a0a0a0 1px, transparent 1px);
  background-size: 3px 4px;
}
.w1-1 .grip { margin-right: 4px; }
.w2-1 .grip { margin-right: 4px; }
.w2-2 .grip { margin-right: 5px; }
.sep {
  width: 1px;
  height: 20px;
  margin: 0 2.500px;
  flex: none;
  background: #b4b4b4;
}
.w2-2 .sep { margin: 0 1.500px; }
.drop {
  width: 15px;
  flex: none;
  height: 4px;
  position: relative;
}
.drop::after {
  content: "";
  position: absolute;
  left: 3px;
  top: 0;
  border: 4px solid transparent;
  border-top: 4px solid #000;
  border-bottom: 0;
}
.tb-btn {
  width: 23px;
  height: 22px;
  display: flex;
  align-items: center;
  justify-content: center;
  flex: none;
  box-sizing: border-box;
}
.tb-btn.pressed {
  background: repeating-conic-gradient(#fff 0 25%, #f0f0f0 0 50%) 0 0 / 2px 2px;
  border: 1px solid #e2e2e2;
}
.ico {
  width: 16px;
  height: 16px;
  overflow: visible;
}
.ico-label {
  font: 700 8px "Liberation Sans", sans-serif;
  fill: #000;
}
.slider {
  width: 286px;
  flex: none;
  margin: 0 5px 0 8px;
  height: 1px;
  background: #999;
  border-bottom: 1px solid #ccc;
  position: relative;
}
.slider b {
  position: absolute;
  left: 0;
  top: -6px;
  width: 3px;
  height: 12px;
  background: #f0f0f0;
  border: 1px solid #aaa;
}

.main {
  flex: 1;
  display: flex;
  min-height: 0;
}
.mdi {
  flex: 1;
  position: relative;
  background: #ababab;
}
.msgwin {
  position: absolute;
  left: 2px;
  top: 1px;
  width: 1000px;
  height: 460px;
  box-sizing: border-box;
  padding: 0 8px 6px 7px;
  display: flex;
  flex-direction: column;
  background: linear-gradient(#9ab5d1, #b9d4ee 40px);
  border: 1px solid #555;
  border-bottom: 2px solid #118a96;
  border-right: 1px solid #1a6d85;
}
.win-title {
  height: 31px;
  flex: none;
  display: flex;
  align-items: center;
}
.win-logo {
  width: 13px;
  height: 14px;
  margin: 3px 7px 0 2px;
  background: #111;
  color: #fff;
  font: 700 10px/14px "Liberation Sans", sans-serif;
  text-align: center;
}
.win-caption {
  margin-top: 4px;
  font: 12px "Open Sans", sans-serif;
  letter-spacing: -0.170px;
  color: #111;
}
.win-btns {
  margin-left: auto;
  display: flex;
  gap: 2px;
  margin-top: 3px;
  margin-right: 1px;
}
.cap-btn {
  width: 32px;
  height: 17px;
  box-sizing: border-box;
  border: 1px solid #6b7f95;
  border-radius: 2px;
  background: linear-gradient(#c7d8ea, #a3bcd7 50%, #8ea8c4 55%, #b4cbe2);
  display: flex;
  align-items: center;
  justify-content: center;
}
.cap-min {
  width: 10px;
  height: 3px;
  margin-top: 3px;
  background: #eef;
  border: 1px solid #5a6a7c;
}
.cap-max {
  width: 8px;
  height: 6px;
  background: #dde;
  border: 1px solid #444;
  border-top-width: 2px;
}
.cap-close {
  border-color: #5a2522;
  background: linear-gradient(#d77f76, #c7584d 50%, #a93429 55%, #c46359);
}
.win-body {
  flex: 1;
  background: #f0f0f0;
  display: flex;
  flex-direction: column;
  min-height: 0;
}
.win-top {
  flex: 1;
  display: flex;
  min-height: 0;
}
.tree-pane {
  width: 287px;
  box-sizing: border-box;
  padding: 1px 0 0 2px;
  display: flex;
  flex-direction: column;
  border-bottom: 1px solid #fff;
}
.tree-wrap {
  display: flex;
  height: 378px;
}
.tree {
  list-style: none;
  margin: 0;
  padding: 0;
  width: 265px;
  background: #fff;
  overflow: hidden;
}
.tree-row {
  height: 18px;
  display: flex;
  align-items: stretch;
  white-space: nowrap;
  font: 11.500px "Open Sans", sans-serif;
  letter-spacing: -0.050px;
  color: #808080;
}
.guide {
  width: 18px;
  margin-left: 10px;
  flex: none;
  border-left: 1px dotted #808080;
}
.guide2 {
  width: 8px;
  flex: none;
  border-left: 1px dotted #808080;
  background: repeating-linear-gradient(90deg, #808080 0 1px, transparent 1px 2px) 0 50% / 100% 1px no-repeat;
}
.tree-label {
  margin: 0;
  padding: 0 1px;
  border: 1px solid transparent;
  height: 14px;
  line-height: 13px;
}
.tree-label.sel {
  color: #000;
  border: 1px dotted #000;
}
.vscroll {
  width: 18px;
  display: flex;
  flex-direction: column;
  align-items: center;
  justify-content: space-between;
  padding: 5px 2px 6px 0;
  box-sizing: border-box;
}
.arrow-v {
  width: 10px;
  height: 6px;
  flex: none;
}
.vtrack {
  flex: 1;
  width: 16px;
  padding-top: 151px;
  box-sizing: border-box;
}
.vthumb {
  height: 97px;
  background: #cdcdcd;
}
.hscroll {
  width: 265px;
  height: 15px;
  display: flex;
  align-items: center;
  padding: 0 6px 0 5px;
  box-sizing: border-box;
}
.arrow-h {
  width: 6px;
  height: 10px;
  flex: none;
}
.hthumb {
  width: 183px;
  height: 15px;
  margin: 0 auto 0 19px;
  background: #cdcdcd;
}
.detail {
  flex: 1;
  min-width: 0;
  box-sizing: border-box;
  padding: 0 13px 17px 12px;
  margin-left: 1px;
  border-left: 2px solid #8c8c8c;
  border-top: 1px solid #8c8c8c;
  border-bottom: 2px solid #a8a8a8;
  display: flex;
  flex-direction: column;
  letter-spacing: -0.550px;
}
.detail-head {
  height: 34px;
  flex: none;
  box-sizing: border-box;
  display: flex;
  justify-content: space-between;
  align-items: center;
  border-bottom: 1px solid #a8a8a8;
  margin-bottom: 13px;
}
.detail-name {
  margin-left: -1px;
  letter-spacing: -0.650px;
}
.list {
  flex: 1;
  border-top: 2px solid #808080;
  border-left: 1px solid #808080;
  background: #fff;
  min-height: 0;
}
.list-head {
  display: flex;
  height: 15px;
  line-height: 15px;
  background: #f0f0f0;
  border-bottom: 1px solid #a8a8a8;
}
.list-head span {
  box-sizing: border-box;
  padding-left: 6px;
  border-right: 2px solid #a8a8a8;
  height: 15px;
}
.list-head .col-rest {
  border: 0;
}
.col-param { width: 250px; }
.col-value { width: 199px; }
.col-units { width: 80px; }
.list-rows {
  padding-top: 1px;
}
.list-row {
  display: flex;
  height: 14px;
  line-height: 14px;
  white-space: pre;
}
.cell-param {
  width: 256px;
  padding-left: 4px;
  box-sizing: border-box;
  overflow: hidden;
  letter-spacing: -0.620px;
}
.cell-value {
  width: 200px;
}
.win-bottom {
  height: 24px;
  flex: none;
  display: flex;
  align-items: center;
  background: linear-gradient(#fff, #f0f0f0 2px);
}
.bottom-tools {
  display: flex;
  align-items: center;
  flex: none;
}
.bottom-tools .tb-btn {
  width: 24px;
}
.bottom-tools .tb-btn.pressed {
  width: 26px;
}
.bottom-tools .sep {
  margin: 0 4px;
}
.spacer {
  width: 2px;
  flex: none;
}
.bt-text {
  margin-right: 9px;
  width: 25px;
  font-size: 12px;
  letter-spacing: -0.200px;
}
.bt-text.off {
  color: #a0a0a0;
}
.bt-text.poll {
  width: 20px;
  margin: 0 6px 0 0;
}
.cmd-field {
  flex: 1;
  height: 18px;
  margin-left: 3px;
  border: 1px solid #8c8c8c;
  border-right-color: #fff;
  border-bottom-color: #fff;
  box-sizing: border-box;
}

.dock {
  width: 345px;
  flex: none;
  display: flex;
  background: #f0f0f0;
  border-top: 2px solid #a8a8a8;
  box-sizing: border-box;
  border-left: 1px solid #fff;
}
.dock-col {
  display: flex;
  flex-direction: column;
}
.dock-left {
  width: 196px;
  padding-left: 3px;
  box-sizing: border-box;
}
.dock-right {
  width: 148px;
  padding-left: 2px;
  box-sizing: border-box;
  border-left: 2px solid #fff;
}
.panel {
  display: flex;
  flex-direction: column;
  padding-bottom: 6px;
  border-bottom: 1px solid #a8a8a8;
}
.panel:last-child {
  border-bottom: 0;
}
.panel-head {
  height: 13px;
  box-sizing: border-box;
  display: flex;
  align-items: center;
  gap: 4px;
  flex: none;
}
.panel-grip {
  width: 174px;
  height: 2px;
  border-top: 1px solid #999;
  border-bottom: 1px solid #999;
  flex: none;
}
.dock-right .panel-grip {
  width: 124px;
}
.panel-x {
  font: 900 14px/13px "DejaVu Sans", sans-serif;
  color: #000;
}
.panel-body {
  display: block;
  background: #000;
  flex: none;
  border-top: 2px solid #8c8c8c;
  border-left: 1px solid #8c8c8c;
  border-bottom: 1px solid #fff;
  box-sizing: content-box;
}
.p-left { width: 187px; }
.p-right { width: 139px; }
.h94 { height: 94px; }
.h95 { height: 95px; }
.h107 { height: 107px; }
.h108 { height: 108px; }
.h191 { height: 191px; }
.h244 { height: 244px; }
.ln {
  fill: none;
  stroke: #c8c8c8;
  stroke-width: 1;
}
.dash {
  fill: none;
  stroke: #d8d8d8;
  stroke-dasharray: 4 3;
}
.t {
  font: 12px "Liberation Sans", sans-serif;
  letter-spacing: -0.200px;
  fill: #c8c8c8;
}
.t.c { text-anchor: middle; }
.t.e { text-anchor: end; }
.t.tall { font-size: 16px; }
.t.green { fill: #00e000; }

.statusbar {
  height: 20px;
  flex: none;
  display: flex;
  align-items: center;
  background: #f0f0f0;
  border-top: 1px solid #fff;
  box-sizing: border-box;
  letter-spacing: -0.200px;
  white-space: nowrap;
}
.st-ready {
  width: 600px;
  padding: 2px 0 0 2px;
  box-sizing: border-box;
}
.st-pane {
  height: 18px;
  display: flex;
  align-items: center;
  gap: 3px;
  box-sizing: border-box;
  padding: 1px 0 0 2px;
  margin-right: 2px;
  border: 1px solid #d8d8d8;
  border-left-color: #a8a8a8;
  border-top-color: #a8a8a8;
  overflow: hidden;
}
.st-ico {
  width: 16px;
  height: 16px;
  flex: none;
}
.st-client { width: 225px; margin-right: 1px; }
.st-server { width: 238px; margin-right: 18px; }
.st-rcv { width: 116px; }
.st-com { width: 106px; margin-right: 3px; }
.st-file { width: 126px; }
.st-proto { width: 47px; margin-right: 2px; }
.st-time {
  width: 45px;
  padding-left: 1px;
  letter-spacing: -0.600px;
}
.st-led {
  width: 20px;
  height: 17px;
  display: flex;
  align-items: center;
  justify-content: center;
  border: 1px solid #d8d8d8;
  box-sizing: border-box;
}
.st-led i {
  width: 10px;
  height: 10px;
  border-radius: 50%;
  background: radial-gradient(circle, #1cf21c 30%, #0a9a2a);
}

.taskbar {
  height: 40px;
  flex: none;
  display: flex;
  background: linear-gradient(90deg, #213f49, #1d3a48 55%, #1b2a4b);
  color: #fff;
}
.start {
  width: 48px;
  display: flex;
  align-items: center;
  justify-content: center;
}
.search {
  width: 344px;
  box-sizing: border-box;
  background: #f0f0f0;
  display: flex;
  align-items: center;
  padding-left: 11px;
  gap: 8px;
  color: #444;
  font: 14px "Noto Sans CJK JP", sans-serif;
  border-bottom: 1px solid #ccc;
}
.task-ico {
  width: 48px;
  display: flex;
  align-items: center;
  justify-content: center;
  box-sizing: border-box;
  flex: none;
}
.task-ico.app-ico {
  width: 49px;
}
.task-ico.first-app {
  margin-left: 2px;
}
.task-ico.running {
  box-shadow: inset 0 -2px 0 #76b9ed;
}
.task-ico.active {
  background: #4b5f69;
  box-shadow: inset 0 -2px 0 #76b9ed;
}
.tray {
  margin-left: auto;
  display: flex;
  align-items: center;
  gap: 9px;
  padding-right: 24px;
}
.tray-vol {
  margin-left: -3px;
}
.ime {
  font: 22px "Liberation Sans", sans-serif;
  transform: scaleX(0.75);
  margin-left: -1px;
}
.clock {
  display: flex;
  flex-direction: column;
  align-items: center;
  gap: 7px;
  font-size: 12px;
  letter-spacing: -0.300px;
  margin: 0 9px 0 0;
  line-height: 13px;
}
</style>
